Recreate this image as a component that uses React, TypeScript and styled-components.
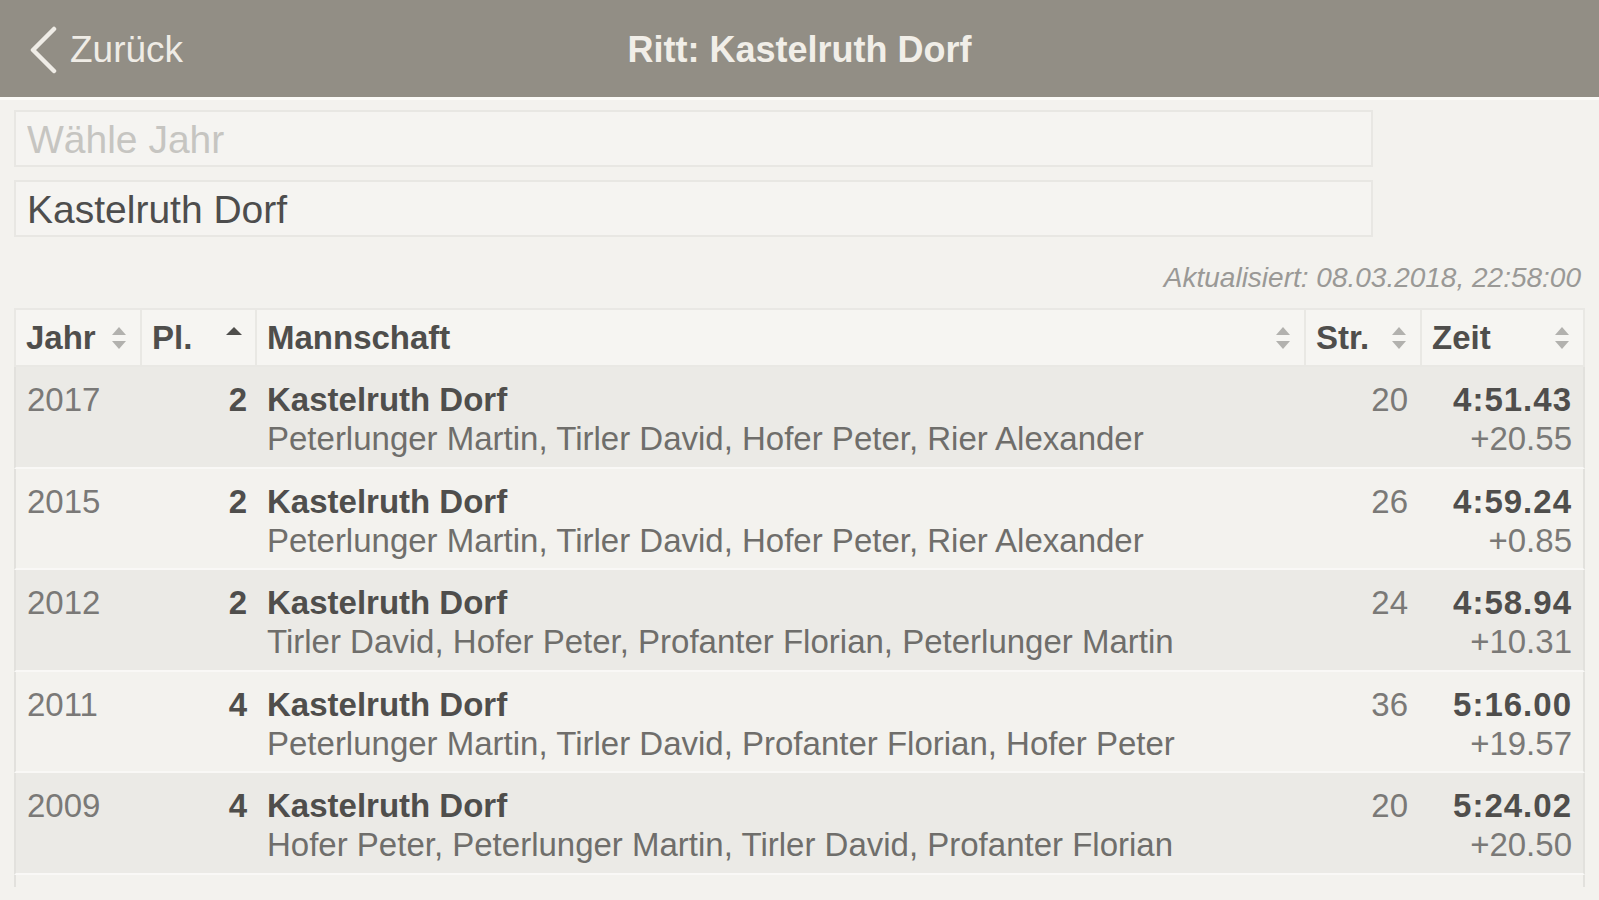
import styled, { createGlobalStyle } from 'styled-components';

interface Result {
  year: number;
  place: number;
  team: string;
  riders: string;
  start: number;
  time: string;
  gap: string;
}

const results: Result[] = [
  {
    year: 2017,
    place: 2,
    team: 'Kastelruth Dorf',
    riders: 'Peterlunger Martin, Tirler David, Hofer Peter, Rier Alexander',
    start: 20,
    time: '4:51.43',
    gap: '+20.55',
  },
  {
    year: 2015,
    place: 2,
    team: 'Kastelruth Dorf',
    riders: 'Peterlunger Martin, Tirler David, Hofer Peter, Rier Alexander',
    start: 26,
    time: '4:59.24',
    gap: '+0.85',
  },
  {
    year: 2012,
    place: 2,
    team: 'Kastelruth Dorf',
    riders: 'Tirler David, Hofer Peter, Profanter Florian, Peterlunger Martin',
    start: 24,
    time: '4:58.94',
    gap: '+10.31',
  },
  {
    year: 2011,
    place: 4,
    team: 'Kastelruth Dorf',
    riders: 'Peterlunger Martin, Tirler David, Profanter Florian, Hofer Peter',
    start: 36,
    time: '5:16.00',
    gap: '+19.57',
  },
  {
    year: 2009,
    place: 4,
    team: 'Kastelruth Dorf',
    riders: 'Hofer Peter, Peterlunger Martin, Tirler David, Profanter Florian',
    start: 20,
    time: '5:24.02',
    gap: '+20.50',
  },
];

type SortState = 'none' | 'asc';

const columns: { label: string; sort: SortState }[] = [
  { label: 'Jahr', sort: 'none' },
  { label: 'Pl.', sort: 'asc' },
  { label: 'Mannschaft', sort: 'none' },
  { label: 'Str.', sort: 'none' },
  { label: 'Zeit', sort: 'none' },
];

const SortIcon = ({ sort }: { sort: SortState }) => (
  <SortSvg width="18" height="28" viewBox="0 0 18 28">
    {sort === 'asc' ? (
      <path d="M9 3 L17 11 L1 11 Z" fill="#4f4e4c" />
    ) : (
      <>
        <path d="M9 3 L16 11 L2 11 Z" fill="#b2b1ae" />
        <path d="M9 25 L16 17 L2 17 Z" fill="#b2b1ae" />
      </>
    )}
  </SortSvg>
);

const App = () => {
  return (
    <>
      <GlobalStyle />
      <NavBar>
        <BackButton type="button">
          <svg width="30" height="48" viewBox="0 0 30 48">
            <path
              d="M26 3 L5 24 L26 45"
              fill="none"
              stroke="#efece6"
              strokeWidth="4.5"
              strokeLinecap="round"
              strokeLinejoin="round"
            />
          </svg>
          Zurück
        </BackButton>
        <Title>Ritt: Kastelruth Dorf</Title>
        <span />
      </NavBar>

      <Content>
        <Field placeholder="Wähle Jahr" readOnly />
        <Field value="Kastelruth Dorf" readOnly />

        <Updated>Aktualisiert: 08.03.2018, 22:58:00</Updated>

        <Table>
          <HeaderRow>
            {columns.map(({ label, sort }) => (
              <HeaderCell key={label}>
                {label}
                <SortIcon sort={sort} />
              </HeaderCell>
            ))}
          </HeaderRow>
          {results.map((r, i) => (
            <Row key={r.year} $striped={i % 2 === 0}>
              <Cell>{r.year}</Cell>
              <Cell $align="right" $bold>
                {r.place}
              </Cell>
              <TeamCell>
                <strong>{r.team}</strong>
                <span>{r.riders}</span>
              </TeamCell>
              <Cell $align="right">{r.start}</Cell>
              <TimeCell>
                <strong>{r.time}</strong>
                <span>{r.gap}</span>
              </TimeCell>
            </Row>
          ))}
          <TableFoot />
        </Table>
      </Content>
    </>
  );
};

export default App;

const GlobalStyle = createGlobalStyle`
  body {
    margin: 0;
    background: #f3f2ee;
    font-family: "Liberation Sans", Arial, Helvetica, sans-serif;
    color: #555;
  }
`;

const NavBar = styled.header`
  display: grid;
  grid-template-columns: 1fr auto 1fr;
  align-items: center;
  box-sizing: border-box;
  height: 100px;
  padding-top: 3px;
  background: #928e85;
  border-bottom: 3px solid #fbfaf7;
  color: #f1eee8;
`;

const BackButton = styled.button`
  display: flex;
  align-items: center;
  gap: 12px;
  justify-self: start;
  margin: 0;
  padding: 0 0 0 28px;
  font-family: inherit;
  font-size: 37px;
  color: #efece6;
  background: none;
  border: none;
`;

const Title = styled.h1`
  margin: 0;
  font-size: 36px;
  font-weight: 700;
`;

const Content = styled.main`
  display: flex;
  flex-direction: column;
  padding: 10px 14px 0;
`;

const Field = styled.input`
  box-sizing: border-box;
  width: 1359px;
  height: 57px;
  margin: 0 0 13px;
  padding: 2px 11px 0;
  font-family: inherit;
  font-size: 39px;
  color: #4d4d4d;
  background: #f5f4f1;
  border: 2px solid #e8e7e3;
  outline: none;

  &::placeholder {
    color: #c6c5c1;
  }
`;

const Updated = styled.p`
  margin: 12px 0 14px;
  padding-right: 4px;
  font-size: 28px;
  line-height: 32px;
  font-style: italic;
  text-align: right;
  color: #9a9996;
`;

const Table = styled.div`
  display: flex;
  flex-direction: column;
`;

const HeaderRow = styled.div`
  display: grid;
  grid-template-columns: 124px 113px 1fr 114px 161px;
  gap: 2px;
  box-sizing: border-box;
  height: 59px;
  background: #e9e8e4;
  border: 2px solid #e9e8e4;
`;

const HeaderCell = styled.div`
  display: flex;
  align-items: center;
  justify-content: space-between;
  padding: 0 12px 0 10px;
  font-size: 33px;
  font-weight: 700;
  color: #4f4e4c;
  background: #f6f5f2;
`;

const SortSvg = styled.svg`
  flex: none;
`;

const Row = styled.div<{ $striped: boolean }>`
  display: grid;
  grid-template-columns: 126px 115px 1fr 116px 165px;
  box-sizing: border-box;
  height: 101.6px;
  padding: 13px 0 8px;
  background: ${({ $striped }) => ($striped ? '#ebeae6' : '#f3f2ee')};
  border-left: 2px solid #e2e1dd;
  border-right: 2px solid #e2e1dd;
  border-bottom: 2px solid #f9f8f6;
  font-size: 33px;
  line-height: 39px;
`;

const Cell = styled.div<{ $align?: 'left' | 'right'; $bold?: boolean }>`
  padding: 0 ${({ $align }) => ($align === 'right' ? '10px' : '0')} 0
    ${({ $align }) => ($align === 'right' ? '0' : '11px')};
  text-align: ${({ $align }) => $align ?? 'left'};
  font-weight: ${({ $bold }) => ($bold ? 700 : 400)};
  color: ${({ $bold }) => ($bold ? '#4f4e4c' : '#7a7977')};
`;

const TeamCell = styled.div`
  display: flex;
  flex-direction: column;
  padding-left: 10px;
  white-space: nowrap;

  strong {
    color: #4f4e4c;
  }

  span {
    color: #6f6e6b;
  }
`;

const TimeCell = styled.div`
  display: flex;
  flex-direction: column;
  align-items: flex-end;
  padding-right: 11px;

  strong {
    color: #4f4e4c;
    letter-spacing: 1px;
  }

  span {
    color: #7a7977;
  }
`;

const TableFoot = styled.div`
  height: 12px;
  border-left: 2px solid #e2e1dd;
  border-right: 2px solid #e2e1dd;
`;
